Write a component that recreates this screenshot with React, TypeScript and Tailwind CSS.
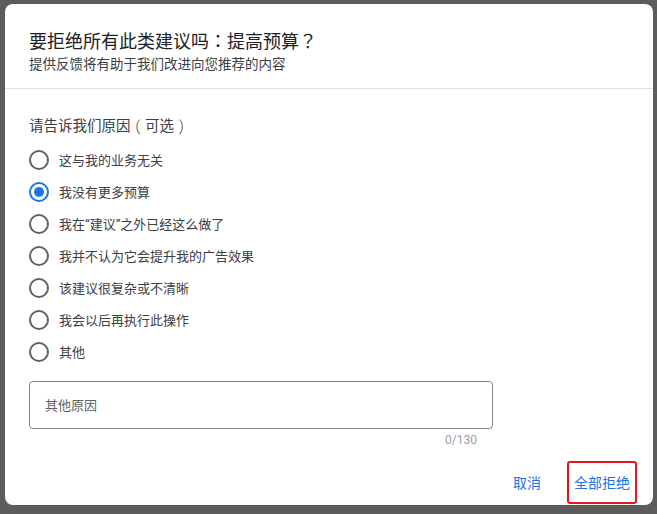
import { useState } from 'react';
import type { ReactNode } from 'react';

// centred full-width punctuation, as in the reference
function P({ children }: { children: ReactNode }) {
  return <span className="font-['Noto_Sans_CJK_TC']">{children}</span>;
}

function Paren({ children }: { children: ReactNode }) {
  return (
    <span className="inline-block w-[1em] text-center font-['Roboto'] font-light leading-none">
      {children}
    </span>
  );
}

function Q({ children }: { children: ReactNode }) {
  return <span className="font-['Roboto']">{children}</span>;
}

const reasons: { key: string; label: ReactNode }[] = [
  { key: 'irrelevant', label: '这与我的业务无关' },
  { key: 'budget', label: '我没有更多预算' },
  {
    key: 'done',
    label: (
      <>
        我在<Q>“</Q>建议<Q>”</Q>之外已经这么做了
      </>
    ),
  },
  { key: 'noeffect', label: '我并不认为它会提升我的广告效果' },
  { key: 'complex', label: '该建议很复杂或不清晰' },
  { key: 'later', label: '我会以后再执行此操作' },
  { key: 'other', label: '其他' },
];

export default function App() {
  const [selected, setSelected] = useState(1);

  return (
    <div
      className="h-[514px] w-full overflow-hidden bg-[#5c5c5c] pl-[5px] pt-[4px]"
      style={{ fontFamily: '"Noto Sans CJK SC", Roboto, sans-serif' }}
    >
      <div className="flex h-[501px] w-[648px] flex-col rounded-lg bg-white">
        <div className="border-b border-[#e0e0e0] px-6 pb-[15px] pt-[24px]">
          <h1 className="text-[18px] leading-[24px] text-[#202124]">
            要拒绝所有此类建议吗<P>：</P>提高预算<P>？</P>
          </h1>
          <p className="mt-[1px] text-[13.5px] leading-[20px] text-[#3c4043]">
            提供反馈将有助于我们改进向您推荐的内容
          </p>
        </div>

        <div className="px-6 pt-[26px]">
          <p className="h-[20px] text-[14.5px] leading-[20px] text-[#3c4043]">
            请告诉我们原因<Paren>(</Paren>可选<Paren>)</Paren>
          </p>
          <div className="mt-[9px] flex flex-col">
            {reasons.map((reason, i) => (
              <ReasonRow
                key={reason.key}
                label={reason.label}
                checked={selected === i}
                onSelect={() => setSelected(i)}
              />
            ))}
          </div>

          <div className="mt-[13px] flex h-[48px] w-[464px] items-center rounded border border-[#80868b] px-[15px]">
            <span className="text-[13px] text-[#5f6368]">其他原因</span>
          </div>
          <div className="mt-[3px] w-[448px] text-right font-['Roboto'] text-[12px] leading-[16px] text-[#9aa0a6]">
            0/130
          </div>
        </div>

        <div className="mt-auto flex items-center justify-end gap-[26px] pb-[1px] pr-[16px]">
          <button className="text-[14px] text-[#1a73e8]">取消</button>
          <button className="flex h-[43px] items-center rounded-[3px] border-2 border-[#e8141c] px-[5px] text-[14px] text-[#1a73e8]">
            全部拒绝
          </button>
        </div>
      </div>
    </div>
  );
}

function ReasonRow({
  label,
  checked,
  onSelect,
}: {
  label: ReactNode;
  checked: boolean;
  onSelect: () => void;
}) {
  return (
    <div className="flex h-[32px] cursor-pointer items-center" onClick={onSelect}>
      <span
        className={`flex h-[20px] w-[20px] items-center justify-center rounded-full border-2 ${checked ? 'border-[#1a73e8]' : 'border-[#5f6368]'}`}
      >
        {checked && <span className="h-[10px] w-[10px] rounded-full bg-[#1a73e8]" />}
      </span>
      <span className="ml-[10px] text-[13px] text-[#3c4043]">{label}</span>
    </div>
  );
}
